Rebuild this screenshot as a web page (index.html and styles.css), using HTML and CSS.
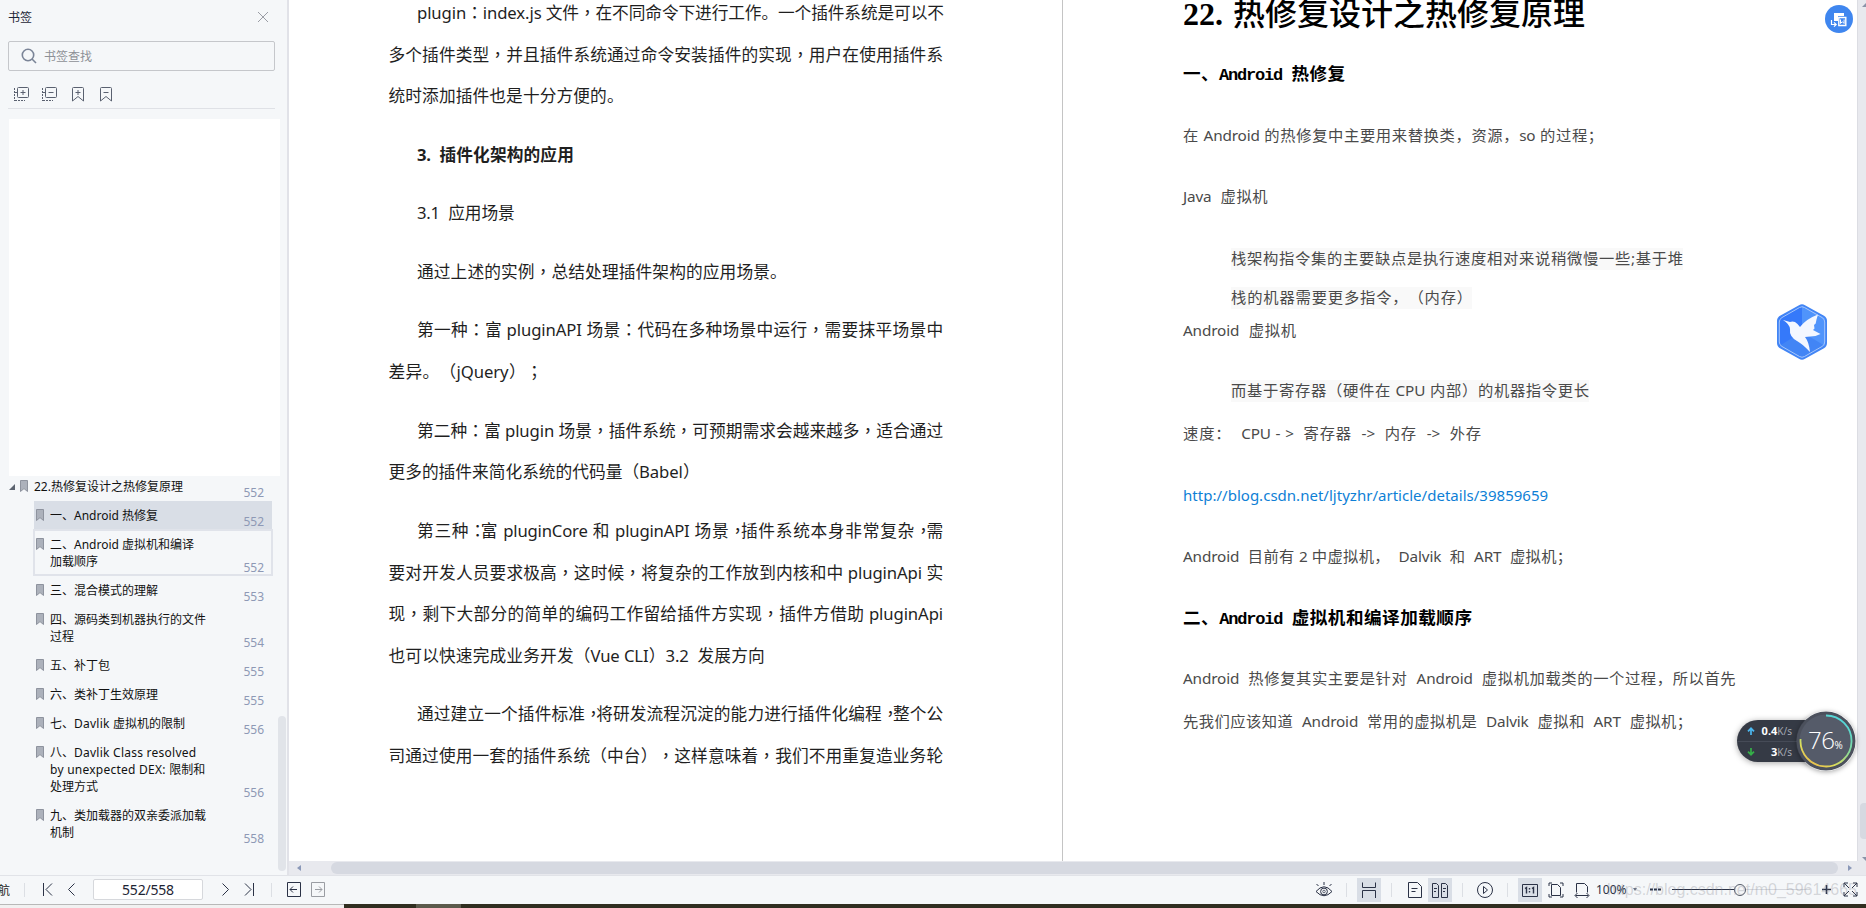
FILE: index.html
```html
<!DOCTYPE html>
<html lang="zh-CN">
<head>
<meta charset="utf-8">
<title>552/558</title>
<link rel="stylesheet" href="styles.css">
</head>
<body>
<svg class="defs" width="0" height="0">
  <symbol id="mark" viewBox="0 0 8 12"><path d="M.5.5h7v11L4 8.6.5 11.500z" fill="#acb1bb" stroke="#8e939e"/></symbol>
</svg>
<div class="app">
  <div class="main">
    <aside class="sidebar">
      <header class="side-head"><span>书签</span>
        <svg width="12" height="12" viewBox="0 0 12 12"><path d="M1 1l10 10M11 1L1 11" stroke="#9a9da5" fill="none"/></svg>
      </header>
      <div class="search">
        <svg width="16" height="16" viewBox="0 0 16 16" fill="none" stroke="#7a8497" stroke-width="1.600"><circle cx="7" cy="7" r="5.700"/><path d="M11 11l4 4"/></svg>
        <span>书签查找</span>
      </div>
      <div class="tools">
        <svg width="15" height="15" viewBox="0 0 15 15" fill="none" stroke="#5a6170"><rect x="3.500" y=".5" width="11" height="10" rx="1"/><path d="M6.500 5.500h5M9 3v5"/><path d="M.5 1v13M1 13.500h10" stroke-dasharray="2 1"/><path d="M1 5.500h2"/></svg>
        <svg width="15" height="15" viewBox="0 0 15 15" fill="none" stroke="#5a6170"><rect x="3.500" y=".5" width="11" height="10" rx="1"/><path d="M6.500 5.500h5"/><path d="M.5 1v13M1 13.500h10" stroke-dasharray="2 1"/><path d="M1 5.500h2"/></svg>
        <svg width="12" height="15" viewBox="0 0 12 15" fill="none" stroke="#5a6170"><path d="M1.500.5h9q1 0 1 1V14L6 9.500.5 14V1.500q0-1 1-1zM3.500 5.500h5M6 3v5"/></svg>
        <svg width="12" height="15" viewBox="0 0 12 15" fill="none" stroke="#5a6170"><path d="M1.500.5h9q1 0 1 1V14L6 9.500.5 14V1.500q0-1 1-1zM3.500 5.500h5"/></svg>
      </div>
      <div class="blank"></div>
      <nav class="tree">
        <div class="node root"><svg class="tri" width="6" height="6" viewBox="0 0 6 6"><path d="M6 0v6H0z" fill="#5d6470"/></svg><svg class="mark" width="8" height="12"><use href="#mark"/></svg><span class="label">22.热修复设计之热修复原理</span><span class="num">552</span></div>
        <div class="node selected"><svg class="mark" width="8" height="12"><use href="#mark"/></svg><span class="label">一、Android 热修复</span><span class="num">552</span></div>
        <div class="node hover"><svg class="mark" width="8" height="12"><use href="#mark"/></svg><span class="label">二、Android 虚拟机和编译<br>加载顺序</span><span class="num">552</span></div>
        <div class="node"><svg class="mark" width="8" height="12"><use href="#mark"/></svg><span class="label">三、混合模式的理解</span><span class="num">553</span></div>
        <div class="node"><svg class="mark" width="8" height="12"><use href="#mark"/></svg><span class="label">四、源码类到机器执行的文件<br>过程</span><span class="num">554</span></div>
        <div class="node"><svg class="mark" width="8" height="12"><use href="#mark"/></svg><span class="label">五、补丁包</span><span class="num">555</span></div>
        <div class="node"><svg class="mark" width="8" height="12"><use href="#mark"/></svg><span class="label">六、类补丁生效原理</span><span class="num">555</span></div>
        <div class="node"><svg class="mark" width="8" height="12"><use href="#mark"/></svg><span class="label">七、<b>Davlik </b>虚拟机的限制</span><span class="num">556</span></div>
        <div class="node"><svg class="mark" width="8" height="12"><use href="#mark"/></svg><span class="label">八、<b>Davlik Class resolved</b><br><b>by unexpected DEX: </b>限制和<br>处理方式</span><span class="num">556</span></div>
        <div class="node"><svg class="mark" width="8" height="12"><use href="#mark"/></svg><span class="label">九、类加载器的双亲委派加载<br>机制</span><span class="num">558</span></div>
      </nav>
      <div class="side-thumb"></div>
    </aside>

    <div class="viewer">
      <div class="pages">
        <article class="page left">
          <div class="para"><p class="in">plugin<i>：</i>index.js 文件<i>，</i>在不同命令下进行工作。一个插件系统是可以不</p><p>多个插件类型<i>，</i>并且插件系统通过命令安装插件的实现<i>，</i>用户在使用插件系</p><p class="w-a">统时添加插件也是十分方便的。</p></div>
          <div class="para"><p class="in w-b">3. &nbsp;插件化架构的应用</p></div>
          <div class="para"><p class="in w-c">3.1 &nbsp;应用场景</p></div>
          <div class="para"><p class="in w-d">通过上述的实例<i>，</i>总结处理插件架构的应用场景。</p></div>
          <div class="para"><p class="in">第一种<i>：</i>富 pluginAPI 场景<i>：</i>代码在多种场景中运行<i>，</i>需要抹平场景中</p><p class="w-e">差异。（jQuery）<i>；</i></p></div>
          <div class="para"><p class="in">第二种<i>：</i>富 plugin 场景<i>，</i>插件系统<i>，</i>可预期需求会越来越多<i>，</i>适合通过</p><p class="w-f">更多的插件来简化系统的代码量（Babel）</p></div>
          <div class="para"><p class="in tight">第三种<i class="n">：</i>富 pluginCore 和 pluginAPI 场景<i class="n">，</i>插件系统本身非常复杂<i class="n">，</i>需</p><p>要对开发人员要求极高<i>，</i>这时候<i>，</i>将复杂的工作放到内核和中 pluginApi 实</p><p>现<i>，</i>剩下大部分的简单的编码工作留给插件方实现<i>，</i>插件方借助 pluginApi</p><p class="w-g">也可以快速完成业务开发（Vue CLI）3.2 &nbsp;发展方向</p></div>
          <div class="para"><p class="in tight">通过建立一个插件标准<i class="n">，</i>将研发流程沉淀的能力进行插件化编程<i class="n">，</i>整个公</p><p>司通过使用一套的插件系统（中台）<i>，</i>这样意味着<i>，</i>我们不用重复造业务轮</p></div>
        </article>
        <article class="page right">
          <h1><b>22.</b><span>热修复设计之热修复原理</span></h1>
          <h2 class="r1">一、<b>Android </b>热修复</h2>
          <p class="r2">在 Android 的热修复中主要用来替换类，资源，so 的过程；</p>
          <p class="r3">Java &nbsp;虚拟机</p>
          <p class="r4 quote">栈架构指令集的主要缺点是执行速度相对来说稍微慢一些;基于堆</p>
          <p class="r5 quote">栈的机器需要更多指令，（内存）</p>
          <p class="r6">Android &nbsp;虚拟机</p>
          <p class="r7 quote">而基于寄存器（硬件在 CPU 内部）的机器指令更长</p>
          <p class="r8">速度： &nbsp;CPU - &gt; &nbsp;寄存器 &nbsp;-&gt; &nbsp;内存 &nbsp;-&gt; &nbsp;外存</p>
          <p class="r9 link">http://blog.csdn.net/ljtyzhr/article/details/39859659</p>
          <p class="r10">Android &nbsp;目前有 2 中虚拟机， &nbsp;Dalvik &nbsp;和 &nbsp;ART &nbsp;虚拟机；</p>
          <h2 class="r11">二、<b>Android </b>虚拟机和编译加载顺序</h2>
          <p class="r12">Android &nbsp;热修复其实主要是针对 &nbsp;Android &nbsp;虚拟机加载类的一个过程，所以首先</p>
          <p class="r13">先我们应该知道 &nbsp;Android &nbsp;常用的虚拟机是 &nbsp;Dalvik &nbsp;虚拟和 &nbsp;ART &nbsp;虚拟机；</p>
        </article>
        <div class="vbar"><svg width="7" height="4" viewBox="0 0 7 4"><path d="M0 4l4-4h3v4z" fill="#8a93a8"/></svg><div class="vthumb"></div><svg class="down" width="7" height="4" viewBox="0 0 7 4"><path d="M0 0l4 4h3V0z" fill="#8a93a8"/></svg></div>
      </div>
      <div class="hbar">
        <svg width="4" height="6" viewBox="0 0 4 6"><path d="M4 0v6L0 3z" fill="#8a98b8"/></svg>
        <div class="hthumb"></div>
        <svg width="4" height="6" viewBox="0 0 4 6"><path d="M0 0v6l4-3z" fill="#8a98b8"/></svg>
      </div>
    </div>
  </div>

  <footer class="status">
    <div class="nav">
      <span class="navtext">航</span><i class="sep s1"></i>
      <svg class="n1" width="10" height="13" viewBox="0 0 10 13"><path d="M.5 0v13M9 .5l-6 6 6 6"/></svg>
      <svg class="n2" width="7" height="13" viewBox="0 0 7 13"><path d="M6.500.5l-6 6 6 6"/></svg>
      <span class="pageno">552/558</span>
      <svg class="n3" width="7" height="13" viewBox="0 0 7 13"><path d="M.5.5l6 6-6 6"/></svg>
      <svg class="n4" width="10" height="13" viewBox="0 0 10 13"><path d="M9.500 0v13M1 .5l6 6-6 6"/></svg>
      <i class="sep s2"></i>
      <svg class="n5" width="14" height="15" viewBox="0 0 14 15"><path d="M.5.5h13v14H.5zM3 7.500h7M6 4.500l-3 3 3 3"/></svg>
      <svg class="n6" width="14" height="15" viewBox="0 0 14 15"><path d="M.5.5h13v14H.5zM4 7.500h7M8 4.500l3 3-3 3"/></svg>
    </div>
    <div class="views">
      <svg class="cell" viewBox="0 0 24 24"><path d="M4 13.500Q12 4 20 13.500Q12 22 4 13.500z"/><circle cx="12" cy="13.500" r="3.400"/><circle cx="12" cy="13.500" r="1.300" stroke-width=".7"/><path d="M12 4v3M4.500 6l2 2M19.500 6l-2 2"/></svg>
      <i class="sep v1"></i>
      <svg class="cell on" viewBox="0 0 24 24"><path d="M5.500 4.500v5h13v-5M5.500 20v-7.500h13V20"/></svg>
      <i class="sep v2"></i>
      <svg class="cell v3" viewBox="0 0 24 24"><path d="M5.500 4.500h9l4 4v11h-13zM8.500 10.500h6M8.500 13.500h4"/></svg>
      <svg class="cell on v4" viewBox="0 0 24 24"><path d="M4.500 5.500h4l2 2v12h-6zM13.500 5.500h4l2 2v12h-6zM6 10.500h3M6 13.500h2M15 10.500h3M15 13.500h2"/></svg>
      <i class="sep v5"></i>
      <svg class="cell v6" viewBox="0 0 24 24"><circle cx="12" cy="12" r="7.500"/><path d="M10.500 8.500v7l4-3.500z"/></svg>
      <i class="sep v7"></i>
      <svg class="cell on" viewBox="0 0 24 24"><path d="M4.500 6.500h15v12h-15z"/><path d="M7 10.500l1.500-1v6M14 10.500l1.500-1v6M11.500 10v1.500M11.500 13v1.500" stroke-width="1.400"/></svg>
      <svg class="cell v8" viewBox="0 0 24 24"><path d="M7.500 6.500h6l3 3v8h-9zM5 8V5h3M16 5h3v3M19 16v3h-3M8 19H5v-3"/></svg>
      <svg class="cell v9" viewBox="0 0 24 24"><path d="M6.500 14.500v-9h8l3 3v6M5.500 17.500h13M7.500 15l-2.500 2.500L7.500 20M16.500 15l2.500 2.500-2.500 2.500"/></svg>
      <span class="zoom">100%</span>
      <svg class="caret" width="4" height="3" viewBox="0 0 4 3"><path d="M0 0h4L2 3z"/></svg>
      <svg class="minus" width="11" height="3" viewBox="0 0 11 3"><path d="M0 1.500h11" stroke-width="2" stroke-dasharray="3 1"/></svg>
      <div class="slider"><div class="done"></div><div class="knob"></div><div class="rest"></div></div>
      <svg class="plus" width="9" height="9" viewBox="0 0 9 9"><path d="M0 4.500h9M4.500 0v9" stroke-width="1.600"/></svg>
      <svg class="full" width="15" height="15" viewBox="0 0 15 15"><path d="M1 5V1h4M1 1l5 5M10 1h4v4M14 1L9 6M14 10v4h-4M14 14L9 9M5 14H1v-4M1 14l5-5"/></svg>
    </div>
  </footer>
  <div class="taskbar"><div class="win"></div><div class="strip"><div class="lit"></div></div></div>
</div>

<svg class="convert" width="28" height="28" viewBox="0 0 28 28"><circle cx="14" cy="14" r="14" fill="#3f86ef"/><path d="M9 8h10v3h-6v5H9z" fill="#fff"/><path d="M13.800 12.500h7v8h-7z" fill="#3f86ef" stroke="#fff" stroke-width="1.400"/><path d="M15.500 14.500v4l1.800-1.800 1.800 1.800v-4" fill="none" stroke="#fff"/><path d="M6.500 15v4.500h4.500M9 17.300l2.200 2.200L9 21.700" fill="none" stroke="#fff" stroke-width="1.200"/></svg>

<svg class="bird" width="52" height="58" viewBox="0 0 52 58">
  <path d="M23 2.200q3-1.800 6 0l19 10.600q3 1.800 3 5.200v22q0 3.400-3 5.200L29 55.800q-3 1.800-6 0L4 45.200Q1 43.400 1 40V18q0-3.400 3-5.200z" fill="#4285f5"/>
  <path d="M26 3L3 15v28l23-14z" fill="#3579fa"/><path d="M26 3l23 12v28L26 29z" fill="#5094fb"/>
  <path d="M23.500 4.500q2.500-1.500 5 0l17.500 10q2.700 1.500 2.700 4.500v20q0 3-2.700 4.500l-17.500 10q-2.500 1.500-5 0L6 43.500Q3.300 42 3.300 39V19q0-3 2.700-4.500z" fill="none" stroke="#a6c6fb" stroke-width="1"/>
  <path d="M7 17l7 2q4-1.500 7.500 2l2.500 3q6-8 18-12.500l-1.500 5-.8 4-1.700 1.500.5 3.500L37 27l7.500 4-5 2-10.500 1q4 5 5 15-8-8.500-13-11-8-4.500-7-12-.5-5-7-9z" fill="#f3f7ff"/>
</svg>

<div class="meter">
  <div class="rates">
    <div class="rate"><svg width="8" height="8" viewBox="0 0 8 8"><path d="M4 8V1.500M1 4.300l3-3 3 3" fill="none" stroke="#4cb8f0" stroke-width="1.700"/></svg><span><b>0.4</b>K/s</span></div>
    <div class="rate"><svg width="8" height="8" viewBox="0 0 8 8"><path d="M4 0v6.500M1 3.700l3 3 3-3" fill="none" stroke="#35b048" stroke-width="1.700"/></svg><span><b>3</b>K/s</span></div>
  </div>
  <div class="dial">
    <svg width="60" height="60" viewBox="0 0 60 60"><defs><linearGradient id="g" x1="0" y1="1" x2=".6" y2="0"><stop offset="0" stop-color="#f0a845"/><stop offset=".3" stop-color="#dfdd58"/><stop offset=".65" stop-color="#83dc9d"/><stop offset="1" stop-color="#55d6d6"/></linearGradient></defs><circle cx="30" cy="30" r="29.500" fill="#4b505c"/><circle cx="30" cy="30" r="26.500" fill="#555b69"/><path d="M30 4.500A25.500 25.500 0 1 1 4.600 28" fill="none" stroke="url(#g)" stroke-width="1.800"/></svg>
    <span class="pct">76<small>%</small></span>
  </div>
</div>
<div class="watermark">https://blog.csdn.net/m0_59614665</div>
</body>
</html>
```
FILE: styles.css
```css
* { box-sizing: border-box; }
body, p, h1, h2 { margin: 0; }
body { width: 1866px; height: 908px; overflow: hidden; background: #fff; font-family: "Noto Sans", "Noto Sans CJK SC", sans-serif; position: relative; text-spacing-trim: space-all; }
svg { display: block; flex: none; }
.defs { position: absolute; }
.app { height: 908px; display: flex; flex-direction: column; }
.main { height: 875px; display: flex; }

.sidebar { width: 289px; height: 875px; background: #f5f7f9; border-right: 2px solid #e1e2e8; position: relative; font-size: 12px; color: #111; }
.side-head { height: 34px; padding: 0 18px 0 8px; display: flex; justify-content: space-between; align-items: center; color: #1c2536; }
.search { margin: 7px 0 0 8px; width: 267px; height: 30px; border: 1px solid #c5c7cb; border-radius: 2px; display: flex; align-items: center; gap: 7px; padding-left: 12px; color: #8d9096; }
.tools { margin: 0 0 0 8px; width: 267px; height: 38px; border-bottom: 1px solid #dfe1e6; display: flex; gap: 13px; padding: 16px 0 0 6px; }
.tools svg + svg + svg { margin-left: 2px; }
.tools svg + svg + svg + svg { margin-left: 3px; }
.blank { margin: 10px 0 0 9px; width: 271px; height: 357px; background: #fff; }
.tree { margin-top: -4px; padding: 0 15px 0 34px; }
.node { display: flex; padding: 6px 8px 6px 2px; line-height: 17px; position: relative; }
.node.root { margin-left: -25px; padding-left: 0; }
.tri { margin: 6px 5px 0 0; }
.mark { margin-top: 2px; }
.label { margin-left: 6px; flex: 1; white-space: nowrap; }
.label b { font-weight: 400; letter-spacing: .25px; }
.num { align-self: flex-end; color: #8e99b5; margin-bottom: -6px; }
.selected { background: #d9dee6; }
.hover::after { content: ""; position: absolute; inset: -1px -1px 0 -1px; border: 2px solid #e0e3ea; }
.side-thumb { position: absolute; right: 1px; top: 716px; width: 8px; height: 155px; border-radius: 4px; background: #e1e4e9; }

.viewer { flex: 1; display: flex; flex-direction: column; }
.pages { height: 861px; display: flex; overflow: hidden; }
.page { background: #fff; white-space: nowrap; }
.page p, .page h1, .page h2 { text-align-last: justify; }
.left { width: 774px; border-right: 1px solid #c4c4c4; padding-left: 99.500px; font-size: 16.700px; line-height: 41.700px; color: #1f1f1f; margin-top: -8px; letter-spacing: -.1px; }
.left .para { margin-bottom: 16.800px; }
.left p { width: 554.500px; }
.left p.in { margin-left: 28.500px; width: 526px; }
/* Centred full-width punctuation */
.left i { font-style: normal; font-family: "Noto Sans CJK TC", sans-serif; font-feature-settings: "locl" 0; }
.left i.n { letter-spacing: -6px; }
.left p.tight { letter-spacing: -.2px; }
.left p.w-a { width: 235px; }
.left p.w-b { width: 156.500px; font-weight: 700; letter-spacing: -.4px; }
.left p.w-c { width: 97.500px; letter-spacing: -.3px; }
.left p.w-d { width: 369.600px; }
.left p.w-e { width: 154px; }
.left p.w-f { width: 311px; }
.left p.w-g { width: 376px; letter-spacing: -.2px; }

.right { width: 794px; padding-left: 120px; font-size: 15.300px; line-height: 24px; color: #4a4a4a; }
.right p { position: relative; top: -2px; letter-spacing: -.15px; }
.right h1 { margin-top: -6px; width: 402px; height: 40px; line-height: 40px; font-size: 32px; font-family: "Liberation Serif", "Noto Sans CJK SC", serif; color: #000; font-weight: 500; display: flex; justify-content: space-between; }
.right h1 b { font-weight: 700; }
.right h2 { font-size: 17.600px; font-weight: 700; color: #000; font-family: "Liberation Mono", "Noto Sans CJK SC", monospace; }
.right h2 b { font-size: 17px; letter-spacing: -1.200px; }
.right .r1 { margin-top: 28.700px; width: 162px; }
.right .r2 { margin-top: 37.600px; width: 420px; }
.right .r3 { margin-top: 36.400px; width: 84.500px; }
.right .r4 { margin-top: 38px; width: 452px; }
.right .r5 { margin-top: 15.600px; width: 241px; }
.right .r6 { margin-top: 8.700px; width: 113px; }
.right .r7 { margin-top: 36px; width: 358px; }
.right .r8 { margin-top: 18.700px; width: 298px; }
.right .r9 { margin-top: 38.300px; width: 364px; }
.right .r10 { margin-top: 36.700px; width: 389px; }
.right .r11 { margin-top: 37.600px; width: 289px; }
.right .r12 { margin-top: 36px; width: 552.500px; }
.right .r13 { margin-top: 18.400px; width: 509px; }
.right .quote { margin-left: 48px; background: linear-gradient(#f9f9f9, #f9f9f9) 0 2px / 100% 22px no-repeat; }
.right .link { color: #0e7fd6; font-size: 15px; letter-spacing: .02px; }

.vbar { width: 9px; background: #e8e9ee; border-left: 1px solid #dcdde3; position: relative; padding: 3px 0 0 4px; display: flex; flex-direction: column; }
.vthumb { margin: 796px 0 0 -2px; width: 8px; height: 42px; background: #d6d9e1; border-radius: 4px 0 0 4px; }
.down { margin-top: 18px; }
.hbar { height: 14px; background: #e8e9ee; display: flex; align-items: center; padding: 0 14px 0 8px; }
.hthumb { flex: 1; height: 12px; border-radius: 6px; background: #d6d9e1; margin: 0 10px 0 30px; }

.status { height: 29px; background: #f5f7f9; border-top: 1px solid #e1e3e8; padding-bottom: 1px; display: flex; justify-content: space-between; }
.status svg { fill: none; stroke: #2b3246; }
.nav, .views { display: flex; align-items: center; }
.navtext { width: 10px; font-size: 12px; direction: rtl; overflow: hidden; white-space: nowrap; color: #222; }
.sep { width: 1px; height: 14px; background: #dcdfe4; flex: none; }
.s1 { margin-left: 14px; }
.n1 { margin-left: 18px; }
.n2 { margin-left: 15px; }
.pageno { margin-left: 18px; width: 110px; height: 21px; line-height: 20px; border: 1px solid #d6d8dc; border-radius: 2px; background: #fff; text-align: center; font-size: 14px; color: #1d2433; letter-spacing: -.2px; }
.n3 { margin-left: 19px; }
.n4 { margin-left: 15px; }
.s2 { margin-left: 17px; }
.n5 { margin-left: 15px; }
.n6 { margin-left: 10px; }
.nav .n6 { stroke: #9a9da3; }
.cell { width: 24px; height: 24px; }
.on { background: #d9dee6; }
.v1 { margin: 0 10px; }
.v2 { margin: 0 11px 0 10px; }
.v4 { margin-left: 1px; }
.v5 { margin: 0 10px; }
.v7 { margin: 0 10px; }
.v8 { margin-left: 2px; }
.v9 { margin-left: 2px; }
.zoom { margin-left: 2px; width: 32px; font-size: 12px; color: #2b3246; }
.views .caret { margin-left: 5px; fill: #6b7283; stroke: none; }
.minus { margin-left: 13px; }
.slider { margin-left: 11px; width: 138px; display: flex; align-items: center; }
.done { width: 62px; height: 1px; background: #2b3246; }
.knob { width: 12px; height: 12px; border: 1px solid #555b68; border-radius: 50%; background: #f5f7f9; }
.rest { flex: 1; height: 1px; background: #d3d6dc; }
.plus { margin-left: 12px; }
.full { margin: 0 8px 0 12px; }

.taskbar { height: 4px; display: flex; }
.win { width: 344px; background: #f1f1f1; border-top: 1px solid #b8b8b8; }
.strip { flex: 1; background: #302e20; padding-left: 72px; }
.lit { width: 45px; height: 4px; background: #5b5a4c; }

.convert { position: absolute; left: 1825px; top: 5px; }
.bird { position: absolute; left: 1776px; top: 303px; }
.meter { position: absolute; left: 1737px; top: 711px; width: 119px; height: 60px; display: flex; align-items: center; }
.rates { width: 100px; height: 42px; border-radius: 21px; background: #353a45; box-shadow: 0 1px 6px rgba(0,0,0,.35); color: #a3a8b3; font-size: 10px; }
.rate { height: 21px; display: flex; align-items: center; justify-content: space-between; padding: 0 44px 0 10px; line-height: 20px; }
.rate + .rate { border-top: 1px solid #464b57; }
.rate b { color: #fff; font-size: 11px; }
.dial { margin-left: -40px; width: 60px; height: 60px; flex: none; position: relative; border-radius: 50%; box-shadow: 0 1px 5px rgba(0,0,0,.35); }
.pct { position: absolute; left: 12px; top: 12px; font: 300 24px/34px "Open Sans", sans-serif; color: #fff; white-space: nowrap; letter-spacing: -.5px; }
.pct small { font-size: 10px; font-weight: 400; }
.watermark { position: absolute; left: 1607px; top: 880px; font: 16px/20px "Liberation Sans", sans-serif; color: rgba(130,130,140,.3); }
```
